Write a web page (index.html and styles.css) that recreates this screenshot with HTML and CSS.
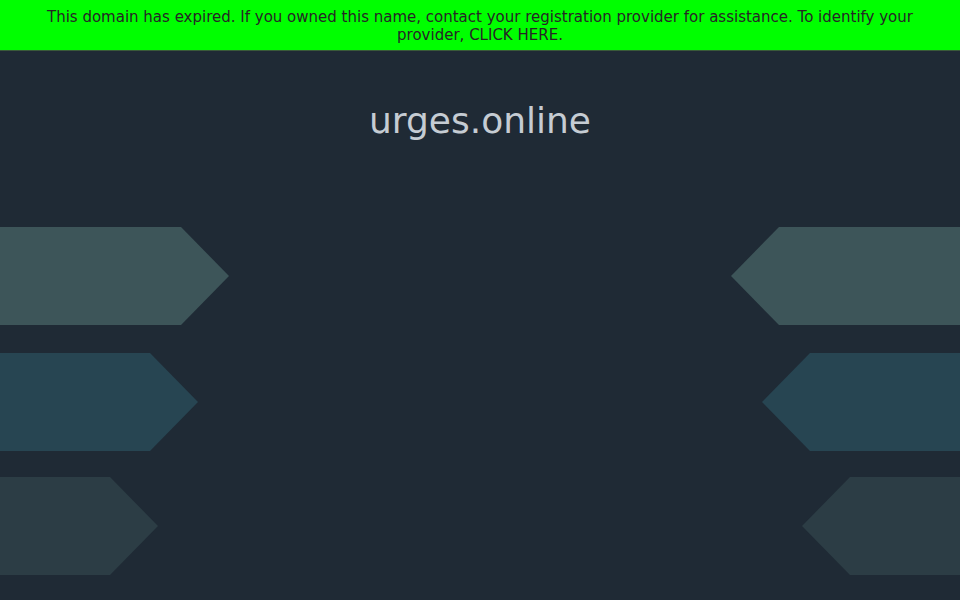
FILE: index.html
```html
<!DOCTYPE html>
<html>
<head>
<meta charset="utf-8">
<link rel="stylesheet" href="styles.css">
</head>
<body>
<div class="banner">This domain has expired. If you owned this name, contact your registration provider for assistance. To identify your provider, <a href="#">CLICK HERE</a>.</div>
<h1 class="title">urges.online</h1>
<div class="arrows">
  <div class="row row1"><div class="shape left"></div><div class="shape right"></div></div>
  <div class="row row2"><div class="shape left"></div><div class="shape right"></div></div>
  <div class="row row3"><div class="shape left"></div><div class="shape right"></div></div>
</div>
</body>
</html>
```
FILE: styles.css
```css
html, body {
  margin: 0;
  padding: 0;
}
body {
  background: #1f2a35;
  font-family: "DejaVu Sans", sans-serif;
  width: 960px;
  height: 600px;
  overflow: hidden;
}
.banner {
  background: #00ff00;
  color: #262626;
  font-size: 15px;
  line-height: 18px;
  text-align: center;
  padding: 8px 40px 0;
  height: 42px;
  border-bottom: 1px solid #3a5a3a;
}
.banner a {
  color: #262626;
  text-decoration: none;
}
.title {
  margin: 0;
  padding-top: 49px;
  height: 42px;
  line-height: 42px;
  font-size: 36px;
  font-weight: normal;
  color: #c5ccd3;
  text-align: center;
}
.arrows {
  padding-top: 85px;
}
.row {
  display: flex;
  justify-content: space-between;
  height: 98px;
}
.row2 { margin-top: 28px; }
.row3 { margin-top: 26px; }
.shape.left {
  clip-path: polygon(0 0, calc(100% - 48px) 0, 100% 50%, calc(100% - 48px) 100%, 0 100%);
}
.shape.right {
  clip-path: polygon(48px 0, 100% 0, 100% 100%, 48px 100%, 0 50%);
}
.row1 .shape { width: 229px; background: #3d5559; }
.row2 .shape { width: 198px; background: #274552; }
.row3 .shape { width: 158px; background: #2c3d45; }
```
